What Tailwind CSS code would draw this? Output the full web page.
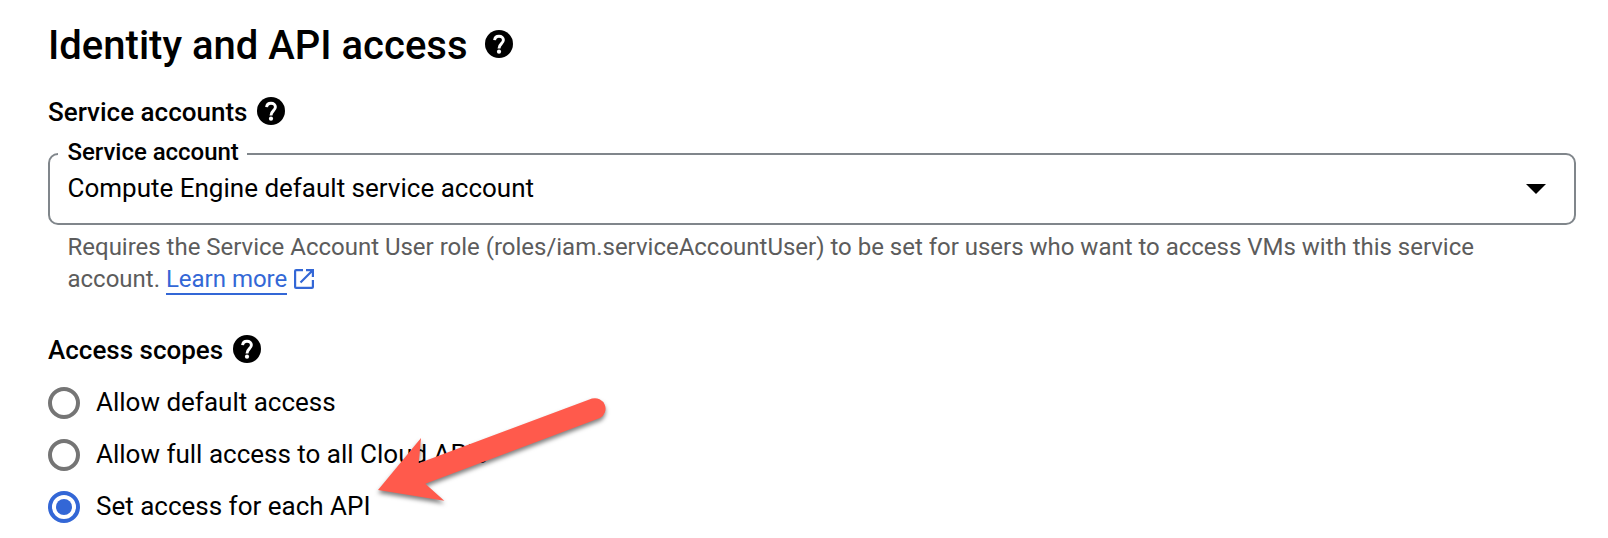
<!DOCTYPE html>
<html lang="en">
<head>
<meta charset="utf-8">
<title>Identity and API access</title>
<script src="https://cdn.jsdelivr.net/npm/@tailwindcss/browser@4"></script>
</head>
<body class="bg-white text-black font-['Roboto',sans-serif]">
<svg class="hidden"><symbol id="help" viewBox="0 0 28 28"><circle cx="14" cy="14" r="14"/><path d="M9.600 10.200C9.800 7.700 11.600 6.200 14 6.200C16.600 6.200 18.400 7.800 18.400 10.100C18.400 13.600 14 13.800 14 18.400" fill="none" stroke="#fff" stroke-width="2.900"/><circle cx="14" cy="21.700" r="2.100" fill="#fff"/></symbol></svg>
<main class="relative h-[538px] overflow-hidden pl-12 pr-8 pt-5">
  <h1 class="flex h-12 items-center text-[40px] leading-[48px] font-medium"><span class="pt-1">Identity and API access</span><svg class="ml-[17.500px] size-7"><use href="#help"/></svg></h1>
  <h2 class="mt-[27px] flex h-8 items-center text-[26px] leading-8 font-medium"><span class="pt-0.5">Service accounts</span><svg class="ml-[9.500px] size-7"><use href="#help"/></svg></h2>
  <fieldset class="mt-[14px] h-[84px] rounded-[10px] border-2 border-[#80868b] pl-[7.500px]">
    <legend class="h-[26px] pl-[10px] pr-[8px] text-[24px] leading-[22px] font-medium tracking-[-0.03px]">Service account</legend>
    <div class="mt-[5px] flex h-8 items-center justify-between pl-[10px] pr-7 text-[26px] leading-8"><span>Compute Engine default service account</span><svg class="mt-0.5 h-2.5 w-5" viewBox="0 0 20 10"><path d="M0 0h20L10 10z"/></svg></div>
  </fieldset>
  <p class="mt-[6px] pl-[19.500px] text-[24px] leading-8 tracking-[-0.01px] text-[#5c5c5c]">Requires the Service Account User role (roles/iam.serviceAccountUser) to be set for users who want to access VMs with this service<br>account. <a class="inline-block h-8 border-b-2 border-[#3367d6] text-[#3367d6]">Learn more</a><svg class="ml-[7px] inline-block size-5 align-[-2px]" viewBox="0 0 20 20" fill="none" stroke="#3367d6" stroke-width="2.200"><path d="M9 1.100H2.100Q1.100 1.100 1.100 2.100V17.900Q1.100 18.900 2.100 18.900H17.900Q18.900 18.900 18.900 17.900V11M12 1.100H18.900V8M18.500 1.500L6.500 13.500"/></svg></p>
  <h2 class="mt-[38px] flex h-8 items-center text-[26px] leading-8 font-medium"><span class="pt-0.5">Access scopes</span><svg class="ml-2.5 size-7"><use href="#help"/></svg></h2>
  <div class="mt-[22px] flex flex-col gap-5 text-[26px] leading-[30px]">
    <label class="flex h-8 gap-4"><span class="size-8 rounded-full border-4 border-[#757575]"></span><span>Allow default access</span></label>
    <label class="flex h-8 gap-4"><span class="size-8 rounded-full border-4 border-[#757575]"></span><span>Allow full access to all Cloud APIs</span></label>
    <label class="flex h-8 gap-4"><span class="grid size-8 place-items-center rounded-full border-4 border-[#3367d6]"><span class="size-4 rounded-full bg-[#3367d6]"></span></span><span>Set access for each API</span></label>
  </div>
  <svg class="absolute top-[380px] left-[360px] h-[150px] w-[270px] drop-shadow-[0_3px_2px_rgb(0_0_0/0.5)]" viewBox="0 0 270 150"><path d="M18 110L61 58L58.700 83.300L232 18.600A10.600 10.600 0 0 1 240 38.100L65.300 103.700L84.300 120.700Z" fill="#ff5a4c"/></svg>
</main>
</body>
</html>
